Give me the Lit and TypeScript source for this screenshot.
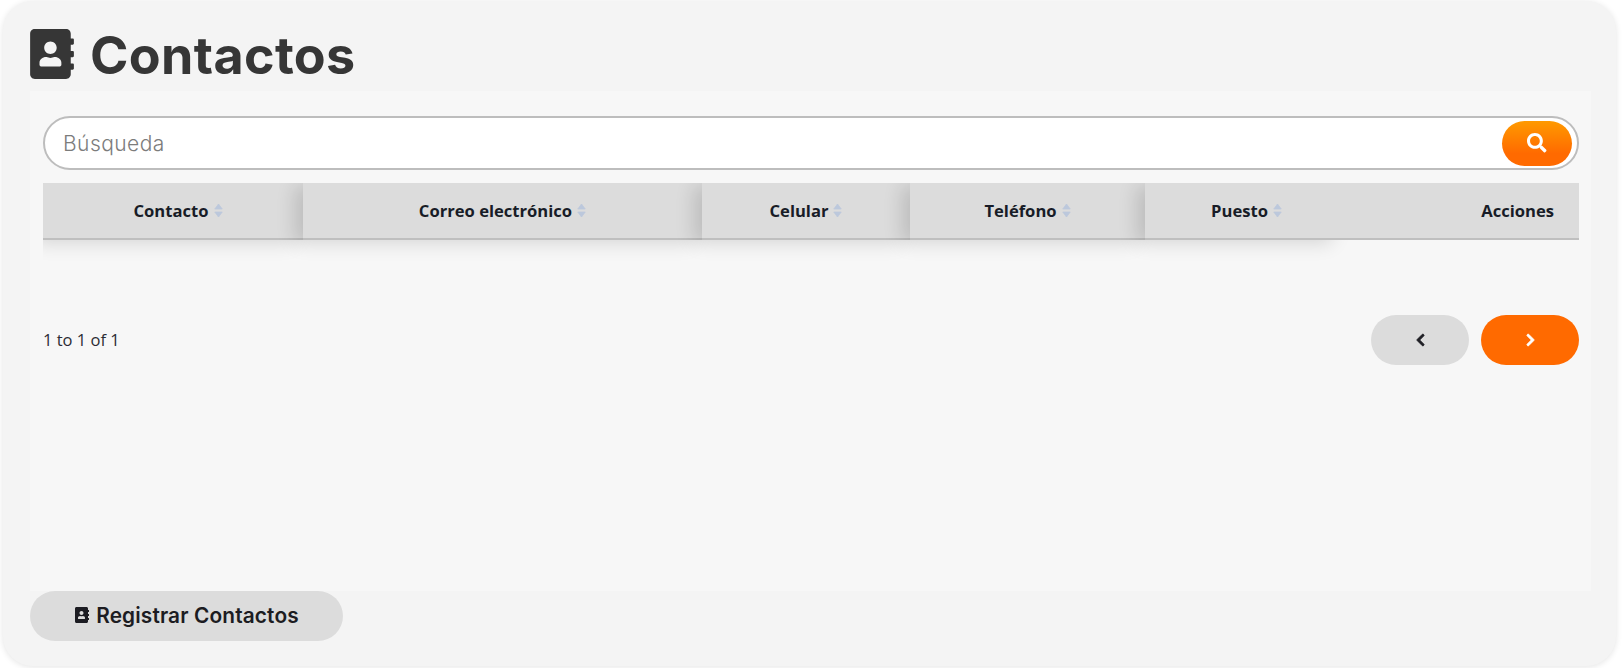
import { LitElement, html, css, svg } from "lit";
import { customElement } from "lit/decorators.js";

const book = svg`<path d="M436 160c6.6 0 12-5.4 12-12v-40c0-6.6-5.4-12-12-12h-20V48c0-26.5-21.5-48-48-48H48C21.5 0 0 21.5 0 48v416c0 26.5 21.5 48 48 48h320c26.5 0 48-21.5 48-48v-48h20c6.6 0 12-5.4 12-12v-40c0-6.6-5.4-12-12-12h-20v-64h20c6.6 0 12-5.4 12-12v-40c0-6.6-5.4-12-12-12h-20v-64h20zm-228-32c35.3 0 64 28.7 64 64s-28.7 64-64 64-64-28.7-64-64 28.7-64 64-64zm112 236.8c0 10.6-10 19.2-22.4 19.2H118.4C106 384 96 375.4 96 364.8v-19.2c0-31.8 30.1-57.6 67.2-57.6h5c12.3 5.1 25.7 8 39.8 8s27.6-2.9 39.8-8h5c37.1 0 67.2 25.8 67.2 57.6v19.2z"/>`;

const columns = [
  { label: "Contacto", cls: "c1" },
  { label: "Correo electrónico", cls: "c2" },
  { label: "Celular", cls: "c3" },
  { label: "Teléfono", cls: "c4" },
  { label: "Puesto", cls: "c5" },
];

@customElement("app-root")
export class AppRoot extends LitElement {
  static styles = css`
    :host { display: block; width: 1623px; height: 668px; background: #fff; overflow: hidden; padding: 1px 0 0 3px; box-sizing: border-box; }
    * { box-sizing: border-box; }
    .card {
      width: 1613px; height: 665px; background: #f4f4f4; border-radius: 30px;
      box-shadow: 0 1px 6px rgba(0,0,0,.11);
      padding: 28px 30px 0 27px; display: flex; flex-direction: column; align-items: flex-start;
    }
    .title { display: flex; align-items: center; gap: 16px; height: 50px; margin: 0 0 12px; color: #363636;
      font: 700 52px/50px Inter, sans-serif; letter-spacing: .35px; }
    .title svg { width: 44px; height: 50px; fill: #363636; display: block; }
    .title span { position: relative; top: 2px; }
    .panel { width: 1561px; height: 500px; background: #f7f7f7; padding: 25px 12px 0 13px; }
    .search { display: flex; align-items: center; justify-content: space-between; height: 54px;
      background: #fff; border: 2px solid #bdbdbd; border-radius: 27px; padding: 0 5px 0 18px; width: 1536px; }
    .search input { flex: 1; border: 0; outline: 0; background: transparent; font: 300 21px Inter, sans-serif; letter-spacing: .45px; color: #333; padding: 0; }
    .search input::placeholder { color: #7c7c7c; opacity: 1; }
    .sbtn { width: 70px; height: 45px; border: 0; border-radius: 23px; padding: 0; display: flex; align-items: center; justify-content: center;
      background: linear-gradient(#ff9a00, #ff6a00 72%); }
    .sbtn svg { width: 19.5px; height: 19.5px; fill: #fff; }
    .wrap { overflow: hidden; margin-top: 13px; height: 120px; }
    .head { display: grid; grid-template-columns: 260px 399px 208px 235px 195px 239px; height: 57px; }
    .th { position: relative; display: flex; align-items: center; justify-content: center; gap: 5px;
      background: #dcdcdc; border-bottom: 2px solid #bfbfbf; color: #181c27;
      font: 700 16.6px "Open Sans", sans-serif; padding-bottom: 1px;
      box-shadow: -8px 3px 18px rgba(0,0,0,.14); }
    .th:last-child { box-shadow: none; justify-content: flex-end; padding-right: 25px; }
    .c1 { padding-left: 10px; }
    .c5 { padding-left: 8px; }
    .sort { width: 9px; height: 15px; display: block; fill: #bcc8dc; stroke: #bcc8dc; stroke-width: .8; stroke-linejoin: round; }
    .pager { display: flex; align-items: center; justify-content: space-between; margin-top: 12px; height: 50px; width: 1536px; }
    .info { font: 400 16.5px "Open Sans", sans-serif; color: #2c2c34; padding-bottom: 2px; }
    .btns { display: flex; gap: 12px; }
    .pbtn { width: 98px; height: 50px; border: 0; border-radius: 25px; padding: 0; display: flex; align-items: center; justify-content: center; }
    .pbtn svg { width: 9px; height: 14px; display: block; stroke-width: 30; }
    .prev { background: #dcdcdc; } .prev svg { fill: #1e1e24; stroke: #1e1e24; }
    .next { background: #ff6a00; } .next svg { fill: #fff; stroke: #fff; }
    .reg { width: 313px; height: 50px; border: 0; border-radius: 25px; background: #dcdcdc; color: #1c1c22;
      display: flex; align-items: center; justify-content: center; gap: 7px; padding: 0 0 2px 1px;
      font: 600 20.8px Inter, sans-serif; letter-spacing: .15px; }
    .reg svg { width: 14px; height: 16px; fill: #1c1c22; display: block; }
  `;

  render() {
    return html`<div class="card">
      <h1 class="title"><svg viewBox="0 0 448 512">${book}</svg><span>Contactos</span></h1>
      <div class="panel">
        <div class="search">
          <input placeholder="Búsqueda" />
          <button class="sbtn"><svg viewBox="0 0 512 512"><path d="M505 442.7L405.3 343c-4.5-4.5-10.6-7-17-7H372c27.6-35.3 44-79.7 44-128C416 93.1 322.9 0 208 0S0 93.1 0 208s93.1 208 208 208c48.3 0 92.7-16.4 128-44v16.3c0 6.4 2.5 12.5 7 17l99.7 99.7c9.4 9.4 24.6 9.4 33.9 0l28.3-28.3c9.4-9.4 9.4-24.6.1-34zM208 336c-70.7 0-128-57.2-128-128 0-70.7 57.2-128 128-128 70.7 0 128 57.2 128 128 0 70.7-57.2 128-128 128z"/></svg></button>
        </div>
        <div class="wrap">
          <div class="head">
            ${columns.map(c => html`<div class="th ${c.cls}">${c.label}<svg class="sort" viewBox="0 0 9 15"><path d="M4.5 1 8.2 6H0.8Z"/><path d="M4.5 14 8.2 9H0.8Z"/></svg></div>`)}
            <div class="th">Acciones</div>
          </div>
        </div>
        <div class="pager">
          <span class="info">1 to 1 of 1</span>
          <div class="btns">
            <button class="pbtn prev"><svg viewBox="0 0 320 512"><path d="M34.52 239.03L228.87 44.69c9.37-9.37 24.57-9.37 33.94 0l22.67 22.67c9.36 9.36 9.37 24.52.04 33.9L131.49 256l154.02 154.75c9.34 9.38 9.32 24.54-.04 33.9l-22.67 22.67c-9.37 9.37-24.57 9.37-33.94 0L34.52 272.97c-9.37-9.37-9.37-24.57 0-33.94z"/></svg></button>
            <button class="pbtn next"><svg viewBox="0 0 320 512"><path d="M285.476 272.971L91.132 467.314c-9.373 9.373-24.569 9.373-33.941 0l-22.667-22.667c-9.357-9.357-9.375-24.522-.04-33.901L188.505 256 34.484 101.255c-9.335-9.379-9.317-24.544.04-33.901l22.667-22.667c9.373-9.373 24.569-9.373 33.941 0L285.475 239.03c9.373 9.372 9.373 24.568.001 33.941z"/></svg></button>
          </div>
        </div>
      </div>
      <button class="reg"><svg viewBox="0 0 448 512">${book}</svg>Registrar Contactos</button>
    </div>`;
  }
}
